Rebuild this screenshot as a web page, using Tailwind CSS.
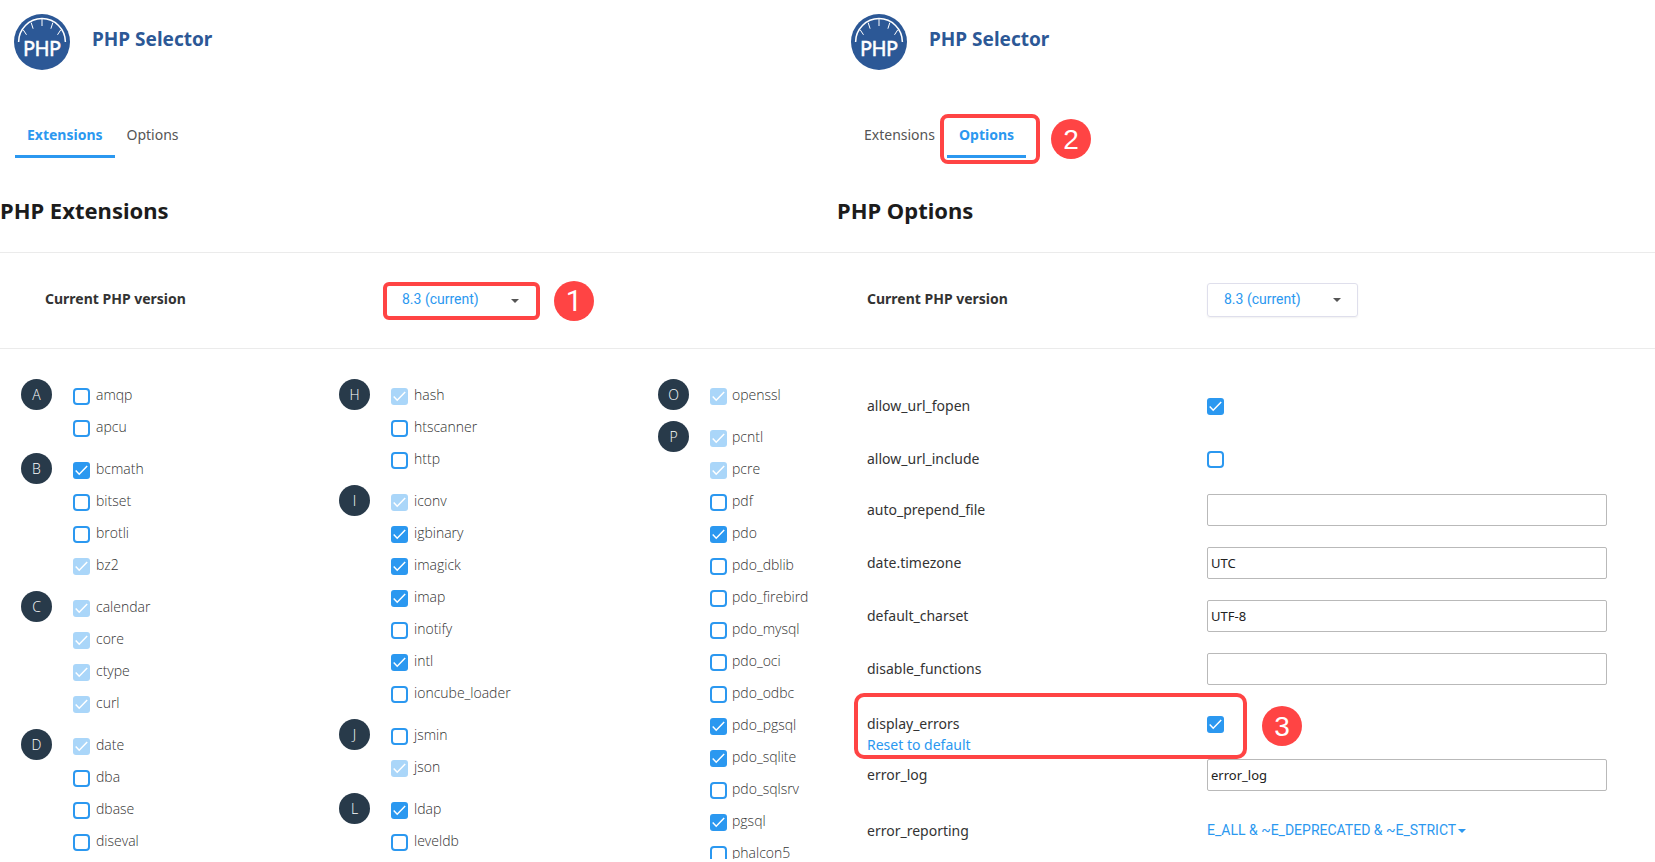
<!DOCTYPE html>
<html lang="en">
<head>
<meta charset="utf-8">
<title>PHP Selector</title>
<script src="https://cdn.jsdelivr.net/npm/@tailwindcss/browser@4"></script>
</head>
<body class="bg-white font-['Noto_Sans','Open_Sans',sans-serif] text-sm text-[#333]">
<svg class="hidden">
  <symbol id="logo" viewBox="0 0 56 56">
    <circle cx="28" cy="28" r="28" fill="#2c5896"/>
    <g fill="none" stroke="#fff">
      <path d="M4.6 28A23.4 23.4 0 0 1 51.4 28" stroke-width="1.5"/>
      <path d="M28 5v7M17.2 8.7l1.9 6M38.8 8.7l-1.9 6M9.2 15.8l3.3 5M46.8 15.8l-3.3 5" stroke-width="1"/>
    </g>
    <text x="9.2" y="42.2" textLength="37.5" lengthAdjust="spacingAndGlyphs" font-family="Lato, sans-serif" font-size="22" fill="#fff" stroke="#fff" stroke-width=".6">PHP</text>
  </symbol>
  <symbol id="tick" viewBox="0 0 17 17"><path d="M2.7 8.6L6.2 12.2L14.2 4" fill="none" stroke="#fff" stroke-width="1.5"/></symbol>
</svg>

<div class="relative flex h-[859px] w-full overflow-hidden">
  <section class="w-[837px] shrink-0">
    <header class="flex h-[124px] items-start pl-[14px] pt-[14px]">
      <svg class="size-14"><use href="#logo"/></svg>
      <h1 class="ml-[22px] mt-[15px] text-[19px]/5 font-bold text-[#2c5896]">PHP Selector</h1>
    </header>
    <nav class="flex h-[71px] items-start pl-[15px]">
      <a class="h-[34px] w-[100px] border-b-3 border-[#2b98f0] pl-3 leading-[22px] font-bold text-[#2b98f0]">Extensions</a>
      <a class="ml-[11.5px] leading-[22px] text-[#555]">Options</a>
    </nav>
    <h2 class="h-[58px] border-b border-[#ebebeb] text-[22px]/[31px] font-bold text-[#1c1c1c]">PHP Extensions</h2>
    <div class="flex h-24 items-start border-b border-[#ebebeb] pl-[45px] pt-[29px]">
      <span class="w-[338px] pt-[7px] leading-5 font-bold">Current PHP version</span>
      <div class="flex h-[38px] w-[157px] items-center justify-between rounded-md border-4 border-[#ff4444] pb-[5px] pl-[15px] pr-[17px] font-[Roboto,sans-serif] text-[#2b98f0]">8.3 (current)
        <i class="mt-[4px] border-x-4 border-t-4 border-x-transparent border-t-[#555]"></i></div>
      <span class="-mt-px ml-[14px] flex size-10 items-center justify-center rounded-full bg-[#ff4444] pt-[2px] font-[Roboto,sans-serif] text-[29px] text-white">1</span>
    </div>
    <div class="flex pt-[31px] font-['Open_Sans',sans-serif] font-light text-[#333]">
      <div id="c1" class="w-[318px] pl-[21px]"></div>
      <div id="c2" class="w-[319px] pl-[21px]"></div>
      <div id="c3" class="w-[200px] pl-[21px]"></div>
    </div>
  </section>

  <section class="min-w-0 flex-1">
    <header class="flex h-[124px] items-start pl-[14px] pt-[14px]">
      <svg class="size-14"><use href="#logo"/></svg>
      <h1 class="ml-[22px] mt-[15px] text-[19px]/5 font-bold text-[#2c5896]">PHP Selector</h1>
    </header>
    <nav class="flex h-[71px] items-start pl-[27px]">
      <a class="w-[83px] leading-[22px] text-[#555]">Extensions</a>
      <a class="h-[34px] w-[79px] border-b-3 border-[#2b98f0] pl-3 leading-[22px] font-bold text-[#2b98f0]">Options</a>
    </nav>
    <h2 class="h-[58px] border-b border-[#ebebeb] text-[22px]/[31px] font-bold text-[#1c1c1c]">PHP Options</h2>
    <div class="flex h-24 items-start border-b border-[#ebebeb] pl-[30px] pt-[30px]">
      <span class="w-[340px] pt-[6px] leading-5 font-bold">Current PHP version</span>
      <div class="flex h-[34px] w-[151px] items-center justify-between rounded-[3px] border border-[#dfdfec] pb-[3px] pl-4 pr-4 font-[Roboto,sans-serif] text-[#2b98f0] shadow-[0_1px_2px_rgba(0,0,0,0.06)]">8.3 (current)
        <i class="mt-[3px] border-x-4 border-t-4 border-x-transparent border-t-[#555]"></i></div>
    </div>
    <div class="pl-[30px] pt-[31px]">
      <div class="flex h-[53px] items-center"><label class="w-[340px] -mt-px">allow_url_fopen</label><svg class="size-[17px] rounded-[3px] bg-[#2b98f0]"><use href="#tick"/></svg></div>
      <div class="-mb-[2px] flex h-[53px] items-center"><label class="w-[340px] -mt-px">allow_url_include</label><span class="size-[17px] rounded-[4px] border-2 border-[#2b98f0]"></span></div>
      <div class="mb-px flex h-[52px] items-center"><label class="w-[340px]">auto_prepend_file</label><div class="h-8 w-[400px] rounded-[2px] border border-[#b9b9b9]"></div></div>
      <div class="mb-px flex h-[52px] items-center"><label class="w-[340px]">date.timezone</label><div class="h-8 w-[400px] rounded-[2px] border border-[#b9b9b9] pl-[3px] text-[13px]/[31px] text-[#222]">UTC</div></div>
      <div class="mb-px flex h-[52px] items-center"><label class="w-[340px]">default_charset</label><div class="h-8 w-[400px] rounded-[2px] border border-[#b9b9b9] pl-[3px] text-[13px]/[31px] text-[#222]">UTF-8</div></div>
      <div class="mb-px flex h-[52px] items-center"><label class="w-[340px]">disable_functions</label><div class="h-8 w-[400px] rounded-[2px] border border-[#b9b9b9]"></div></div>
      <div class="flex h-[53px] items-start pt-[17px]"><div class="w-[340px] leading-[21px]"><label class="block">display_errors</label><a class="block text-[#2b98f0]">Reset to default</a></div><svg class="mt-[3px] size-[17px] rounded-[3px] bg-[#2b98f0]"><use href="#tick"/></svg></div>
      <div class="mb-px flex h-[52px] items-center"><label class="w-[340px]">error_log</label><div class="h-8 w-[400px] rounded-[2px] border border-[#b9b9b9] pl-[3px] text-[13px]/[31px] text-[#222]">error_log</div></div>
      <div class="flex h-[57px] items-center"><label class="w-[340px]">error_reporting</label><a class="-mt-[2px] flex items-center gap-[2px] font-[Roboto,sans-serif] text-[#2b98f0]">E_ALL &amp; ~E_DEPRECATED &amp; ~E_STRICT<i class="mt-[2px] border-x-4 border-t-4 border-x-transparent border-t-[#2b98f0]"></i></a></div>
    </div>
  </section>

  <div class="absolute left-[940px] top-[114px] h-[50px] w-[100px] rounded-[8px] border-4 border-[#ff4444]"></div>
  <span class="absolute left-[1051px] top-[119px] flex size-10 items-center justify-center rounded-full bg-[#ff4444] pt-[2px] font-['Liberation_Sans',sans-serif] text-[28px] text-white">2</span>
  <div class="absolute left-[854px] top-[693px] h-[66px] w-[393px] rounded-[10px] border-4 border-[#ff4444]"></div>
  <span class="absolute left-[1262px] top-[706px] flex size-10 items-center justify-center rounded-full bg-[#ff4444] pt-[2px] font-['Liberation_Sans',sans-serif] text-[28px] text-white">3</span>
</div>

<script>
// Per item: trailing "*" = enabled, "~" = enabled and locked
const columns = {
  c1: ['A amqp apcu', 'B bcmath* bitset brotli bz2~', 'C calendar~ core~ ctype~ curl~', 'D date~ dba dbase diseval'],
  c2: ['H hash~ htscanner http', 'I iconv~ igbinary* imagick* imap* inotify intl* ioncube_loader', 'J jsmin json~', 'L ldap* leveldb'],
  c3: ['O openssl~', 'P pcntl~ pcre~ pdf pdo* pdo_dblib pdo_firebird pdo_mysql pdo_oci pdo_odbc pdo_pgsql* pdo_sqlite* pdo_sqlsrv pgsql* phalcon5'],
};
const tick = '<use href="#tick"/></svg>';
for (const [id, groups] of Object.entries(columns)) {
  const gap = id === 'c3' ? 'gap-[5px]' : 'gap-[6px]';
  document.getElementById(id).innerHTML = groups.map(g => {
    const [letter, ...items] = g.split(' ');
    return `<div class="mb-[10px] flex items-start"><span class="-mt-px mr-[21px] flex size-[31px] items-center justify-center rounded-full bg-[#283a4a] text-white">${letter}</span><ul>` +
      items.map(it => {
        const box = it.endsWith('*') ? '<svg class="mt-px size-[17px] rounded-[3px] bg-[#2b98f0]">' + tick
          : it.endsWith('~') ? '<svg class="mt-px size-[17px] rounded-[3px] bg-[#aad6f9]">' + tick
          : '<span class="mt-px size-[17px] rounded-[4px] border-2 border-[#2b98f0]"></span>';
        return `<li class="flex h-8 items-center ${gap}">${box}<span class="-mt-[2px]">${it.replace(/[*~]$/, '')}</span></li>`;
      }).join('') + '</ul></div>';
  }).join('');
}
</script>
</body>
</html>
